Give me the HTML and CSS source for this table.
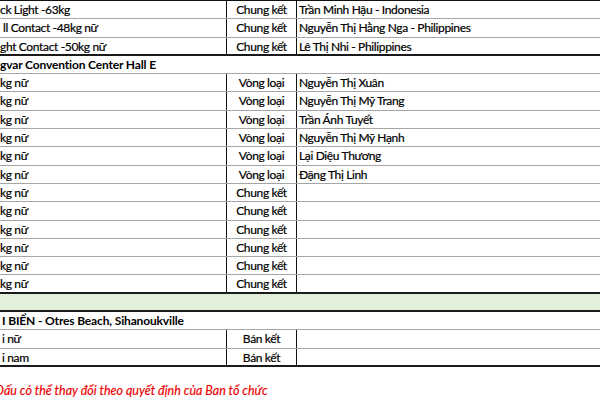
FILE: index.html
```html
<!DOCTYPE html>
<html lang="vi">
<head>
<meta charset="utf-8">
<title>Lịch thi đấu</title>
<link rel="stylesheet" href="styles.css">
</head>
<body>
<div class="sheet">
  <div class="grp first">
    <div class="row"><div class="c1">ck Light -63kg</div><div class="c2">Chung kết</div><div class="c3">Trần Minh Hậu - Indonesia</div></div>
    <div class="row"><div class="c1 in3">ll Contact -48kg nữ</div><div class="c2">Chung kết</div><div class="c3">Nguyễn Thị Hằng Nga - Philippines</div></div>
    <div class="row end"><div class="c1">ght Contact -50kg nữ</div><div class="c2">Chung kết</div><div class="c3">Lê Thị Nhi - Philippines</div></div>
  </div>
  <div class="section">gvar Convention Center Hall E</div>
  <div class="grp">
    <div class="row"><div class="c1">kg nữ</div><div class="c2">Vòng loại</div><div class="c3">Nguyễn Thị Xuân</div></div>
    <div class="row"><div class="c1">kg nữ</div><div class="c2">Vòng loại</div><div class="c3">Nguyễn Thị Mỹ Trang</div></div>
    <div class="row"><div class="c1">kg nữ</div><div class="c2">Vòng loại</div><div class="c3">Trần Ánh Tuyết</div></div>
    <div class="row"><div class="c1">kg nữ</div><div class="c2">Vòng loại</div><div class="c3">Nguyễn Thị Mỹ Hạnh</div></div>
    <div class="row"><div class="c1">kg nữ</div><div class="c2">Vòng loại</div><div class="c3">Lại Diệu Thương</div></div>
    <div class="row"><div class="c1">kg nữ</div><div class="c2">Vòng loại</div><div class="c3">Đặng Thị Linh</div></div>
    <div class="row"><div class="c1">kg nữ</div><div class="c2">Chung kết</div><div class="c3"></div></div>
    <div class="row"><div class="c1">kg nữ</div><div class="c2">Chung kết</div><div class="c3"></div></div>
    <div class="row"><div class="c1">kg nữ</div><div class="c2">Chung kết</div><div class="c3"></div></div>
    <div class="row"><div class="c1">kg nữ</div><div class="c2">Chung kết</div><div class="c3"></div></div>
    <div class="row"><div class="c1">kg nữ</div><div class="c2">Chung kết</div><div class="c3"></div></div>
    <div class="row end"><div class="c1">kg nữ</div><div class="c2">Chung kết</div><div class="c3"></div></div>
  </div>
  <div class="band"></div>
  <div class="section in2">I BIỂN - Otres Beach, Sihanoukville</div>
  <div class="grp">
    <div class="row"><div class="c1 in2">i nữ</div><div class="c2">Bán kết</div><div class="c3"></div></div>
    <div class="row end"><div class="c1 in2">i nam</div><div class="c2">Bán kết</div><div class="c3"></div></div>
  </div>
  <p class="note"><span class="cut">Đ</span>ấu có thể thay đổi theo quyết định của Ban tổ chức</p>
</div>
</body>
</html>
```
FILE: styles.css
```css
html, body {
  margin: 0;
  padding: 0;
  background: #fff;
}
body {
  font-family: Lato, "Noto Sans", "DejaVu Sans", sans-serif;
  font-size: 12px;
  color: #000;
  width: 600px;
  height: 400px;
  overflow: hidden;
}
.sheet {
  width: 600px;
}
.grp.first {
  border-top: 1px solid #111;
}
.row {
  display: grid;
  grid-template-columns: 227px 70px 1fr;
  height: 18.3px;
  box-sizing: border-box;
  border-bottom: 1px solid #a6a6a6;
}
.row.end {
  border-bottom: 2px solid #1a1a1a;
}
.c1, .c2, .c3 {
  line-height: 17px;
  white-space: nowrap;
  overflow: hidden;
  letter-spacing: -0.35px;
  -webkit-text-stroke: 0.2px #000;
}
.c1 {
  padding-left: 0;
  border-right: 1px solid #111;
}
.c1.in3 { padding-left: 3px; }
.c1.in2 { padding-left: 2px; }
.c2 {
  text-align: center;
  border-right: 1px solid #111;
}
.c3 {
  padding-left: 2px;
}
.section {
  height: 18.3px;
  box-sizing: border-box;
  line-height: 17px;
  font-weight: bold;
  letter-spacing: -0.15px;
  border-bottom: 1px solid #a6a6a6;
  white-space: nowrap;
}
.section.in2 { padding-left: 2px; }
.band {
  height: 18.3px;
  box-sizing: border-box;
  background: #e2efda;
  border-bottom: 2px solid #1a1a1a;
}
.note {
  margin: 16px 0 0 0;
  color: #ee0000;
  font-style: italic;
  font-size: 12.5px;
  line-height: 16px;
  white-space: nowrap;
  -webkit-text-stroke: 0.15px #ee0000;
}
.cut {
  display: inline-block;
  margin-left: -5px;
}
```
